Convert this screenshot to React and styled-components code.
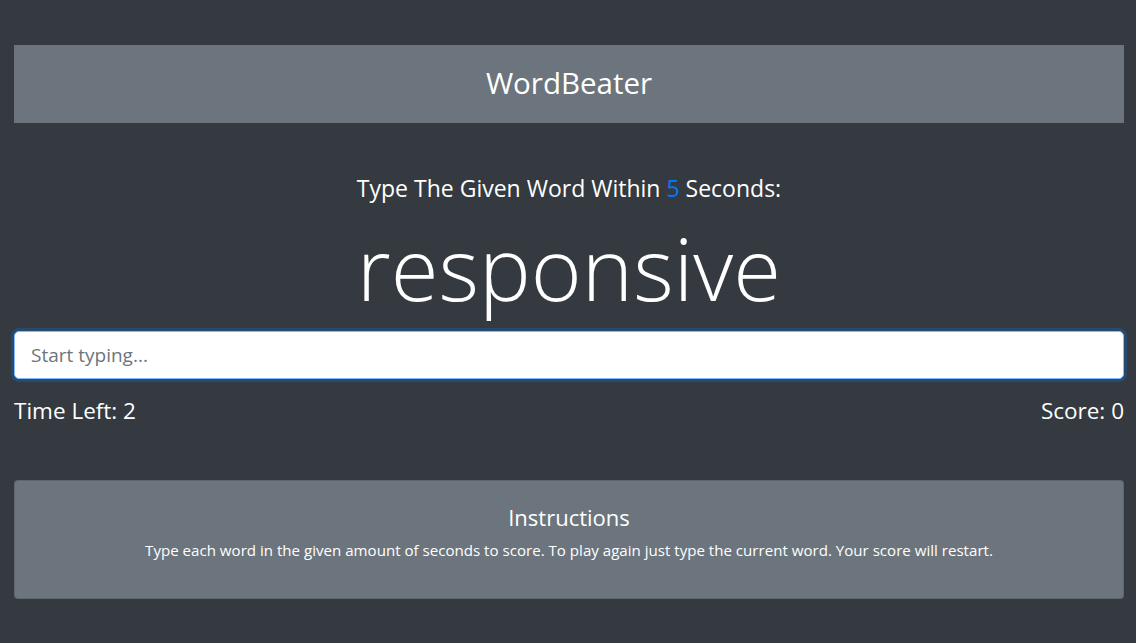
import styled, { createGlobalStyle } from "styled-components";

const Global = createGlobalStyle`
  body {
    margin: 0;
    background: #343a40;
    color: #fff;
    font-family: "Open Sans", "Noto Sans", sans-serif;
  }
`;

const App = () => {
  return (
    <>
      <Global />
      <Container>
        <Header>WordBeater</Header>
        <Lead>
          Type The Given Word Within <Seconds>5</Seconds> Seconds:
        </Lead>
        <Word>responsive</Word>
        <Input placeholder="Start typing..." autoFocus />
        <Stats>
          <Stat>Time Left: 2</Stat>
          <Stat>Score: 0</Stat>
        </Stats>
        <Card>
          <CardTitle>Instructions</CardTitle>
          <CardText>
            Type each word in the given amount of seconds to score. To play
            again just type the current word. Your score will restart.
          </CardText>
        </Card>
      </Container>
    </>
  );
};
export default App;

const Container = styled.div`
  width: 1110px;
  margin-left: 14px;
  padding-top: 45px;
  display: flex;
  flex-direction: column;
`;

const Header = styled.header`
  box-sizing: border-box;
  height: 78px;
  padding-bottom: 3px;
  background: #6c757d;
  display: flex;
  align-items: center;
  justify-content: center;
  font-size: 29.5px;
`;

const Lead = styled.p`
  margin: 50px 0 0;
  text-align: center;
  font-size: 23px;
  line-height: 30px;
`;

const Seconds = styled.span`
  color: #007bff;
`;

const Word = styled.h1`
  margin: 14px 0 0;
  text-align: center;
  font-size: 87px;
  font-weight: 300;
  line-height: 100px;
`;

const Input = styled.input`
  box-sizing: border-box;
  height: 48px;
  margin-top: 14px;
  padding: 8px 16px;
  font-family: inherit;
  font-size: 19px;
  color: #495057;
  background: #fff;
  border: 1px solid #80bdff;
  border-radius: 5px;
  outline: none;
  box-shadow: 0 0 0 3px rgba(0, 123, 255, 0.25);
  &::placeholder {
    color: #6c757d;
  }
`;

const Stats = styled.div`
  display: flex;
  justify-content: space-between;
  margin-top: 17px;
`;

const Stat = styled.h3`
  margin: 0;
  font-size: 22.5px;
  font-weight: 400;
  line-height: 30px;
`;

const Card = styled.div`
  margin-top: 54px;
  background: #6c757d;
  border: 1px solid rgba(0, 0, 0, 0.125);
  border-radius: 4px;
  padding: 20px 20px 37px;
  text-align: center;
`;

const CardTitle = styled.h5`
  margin: 0 0 6px;
  font-size: 22px;
  font-weight: 400;
  line-height: 32px;
`;

const CardText = styled.p`
  margin: 0;
  font-size: 15.1px;
  line-height: 22px;
`;
